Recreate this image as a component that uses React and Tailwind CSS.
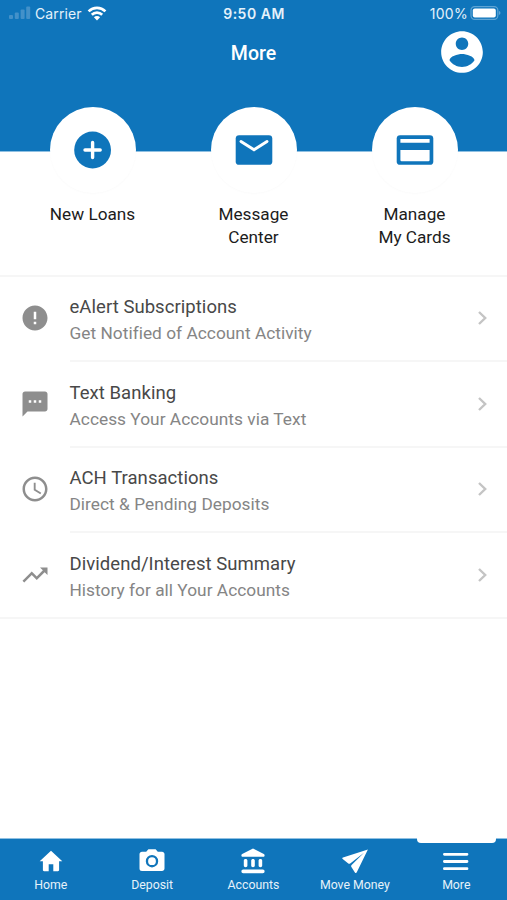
import React from "react";

const actions = [
  {
    label: ["New Loans"],
    icon: (
      <svg viewBox="0 0 44 44" className="h-11 w-11">
        <circle cx="21.6" cy="22" r="18.4" fill="#0f75bb" />
        <path d="M21.6 14.4v15.2M14 22h15.2" stroke="#fff" strokeWidth="3.4" strokeLinecap="round" />
      </svg>
    ),
  },
  {
    label: ["Message", "Center"],
    icon: (
      <svg viewBox="0 0 44 44" className="h-11 w-11">
        <rect x="3.7" y="7.2" width="36.6" height="29.6" rx="3.4" fill="#0f75bb" />
        <path d="M9 13.5 22 21.7 35 13.5" fill="none" stroke="#fff" strokeWidth="3" strokeLinecap="round" />
      </svg>
    ),
  },
  {
    label: ["Manage", "My Cards"],
    icon: (
      <svg viewBox="0 0 44 44" className="h-11 w-11">
        <rect x="3.7" y="7.2" width="36.6" height="29.6" rx="3.4" fill="#0f75bb" />
        <path d="M7.4 11h29.2v3.8H7.4zM7.4 22h29.2v10a1.2 1.2 0 0 1-1.2 1.2H8.6A1.2 1.2 0 0 1 7.4 32z" fill="#fff" />
      </svg>
    ),
  },
];

const rows = [
  {
    title: "eAlert Subscriptions",
    sub: "Get Notified of Account Activity",
    d: "M12 2C6.48 2 2 6.48 2 12s4.48 10 10 10 10-4.48 10-10S17.52 2 12 2zm1 15h-2v-2h2v2zm0-4h-2V7h2v6z",
  },
  {
    title: "Text Banking",
    sub: "Access Your Accounts via Text",
    d: "M20 2H4c-1.1 0-1.99.9-1.99 2L2 22l4-4h14c1.1 0 2-.9 2-2V4c0-1.1-.9-2-2-2zM9 11H7V9h2v2zm4 0h-2V9h2v2zm4 0h-2V9h2v2z",
  },
  {
    title: "ACH Transactions",
    sub: "Direct & Pending Deposits",
    d: "M11.99 2C6.47 2 2 6.48 2 12s4.47 10 9.99 10C17.52 22 22 17.52 22 12S17.52 2 11.99 2zM12 20c-4.42 0-8-3.58-8-8s3.58-8 8-8 8 3.58 8 8-3.58 8-8 8zm.5-13H11v6l5.25 3.15.75-1.23-4.5-2.67z",
  },
  {
    title: "Dividend/Interest Summary",
    sub: "History for all Your Accounts",
    d: "M16 6l2.29 2.29-4.88 4.88-4-4L2 16.59 3.41 18l6-6 4 4 6.3-6.29L22 12V6z",
  },
];

const tabs = [
  {
    label: "Home",
    icon: <path d="M14 2.8 2.7 13.2h3.2v8.9c0 .7.5 1.2 1.2 1.2h4.6v-7h4.6v7h4.6c.7 0 1.2-.5 1.2-1.2v-8.9h3.2z" />,
  },
  {
    label: "Deposit",
    icon: (
      <path
        fillRule="evenodd"
        d="M10.4 1.2h7.2l2.2 2.5h4.2c1.4 0 2.5 1.1 2.5 2.4v14.4c0 1.4-1.1 2.5-2.5 2.5H4a2.5 2.5 0 0 1-2.5-2.5V6.1c0-1.3 1.1-2.4 2.5-2.4h4.2zM14 7a6.2 6.2 0 1 0 0 12.4A6.2 6.2 0 0 0 14 7zm0 2.3a3.9 3.9 0 1 1 0 7.8 3.9 3.9 0 0 1 0-7.8z"
      />
    ),
  },
  {
    label: "Accounts",
    icon: (
      <path d="M14 0.4 3.2 5.9a1.5 1.5 0 0 0-.8 1.4v.2c0 .8.5 1.3 1.3 1.3h20.6c.8 0 1.3-.5 1.3-1.3v-.2c0-.6-.3-1.1-.8-1.4zM6.6 10.9c1.1 0 1.8.7 1.8 1.7v4.9c0 1-.7 1.7-1.8 1.7s-1.8-.7-1.8-1.7v-4.9c0-1 .7-1.7 1.8-1.7zM14 10.9c1.1 0 1.8.7 1.8 1.7v4.9c0 1-.7 1.7-1.8 1.7s-1.8-.7-1.8-1.7v-4.9c0-1 .7-1.7 1.8-1.7zM21.4 10.9c1.1 0 1.8.7 1.8 1.7v4.9c0 1-.7 1.7-1.8 1.7s-1.8-.7-1.8-1.7v-4.9c0-1 .7-1.7 1.8-1.7zM4.2 21.5h19.6a1.8 1.8 0 0 1 0 3.7H4.2a1.8 1.8 0 0 1 0-3.7z" />
    ),
  },
  {
    label: "Move Money",
    icon: (
      <path d="M26.9 1.4 2 9.4c-.8.3-.9 1-.3 1.6l5.6 4.4c.6.4 1.3.4 1.9 0L23 4.7 10.6 17c-.6.6-.6 1.2-.2 1.9l3.5 5.5c.6.7 1.4.7 1.9-.1z" />
    ),
  },
  {
    label: "More",
    icon: (
      <path
        d="M2.4 6.3h22.6M2.4 13.5h22.6M2.4 20.7h22.6"
        stroke="#fff"
        strokeWidth="2.8"
        strokeLinecap="round"
      />
    ),
  },
];

function StatusBar() {
  return (
    <div className="grid h-[26px] grid-cols-[1fr_auto_1fr] items-center pr-[6px] pl-[9px] font-['Inter'] text-[14px] text-[#e4f1fa]">
      <div className="flex items-center">
        <svg viewBox="0 0 22 14" className="h-[14px] w-[22px]" fill="#4391c9">
          <rect x="0" y="9" width="4" height="4" rx="1" />
          <rect x="5.8" y="6.5" width="4" height="6.5" rx="1" />
          <rect x="11.6" y="3.5" width="4" height="9.5" rx="1" />
          <rect x="17.2" y="0.5" width="4" height="12.5" rx="1" />
        </svg>
        <span className="ml-1 w-[47px] tracking-[0.1px] whitespace-nowrap">Carrier</span>
        <svg viewBox="0 0 20 15" className="ml-[5px] h-[15px] w-5" fill="none" stroke="#fff" strokeWidth="2.7">
          <path d="M1.6 5.4a12 12 0 0 1 16.8 0" />
          <path d="M4.8 8.8a7.4 7.4 0 0 1 10.4 0" />
          <path d="M10 14.4 6.9 11.2a4.4 4.4 0 0 1 6.2 0z" fill="#fff" stroke="none" />
        </svg>
      </div>
      <span className="pr-[2px] text-center font-semibold tracking-[0.5px] whitespace-nowrap">9:50 AM</span>
      <div className="flex items-center justify-end">
        <span className="tracking-[0.3px]">100%</span>
        <svg viewBox="0 0 31 14" className="ml-[2px] h-[14px] w-[31px]">
          <rect x="1" y="0.6" width="26.8" height="12.8" rx="3.6" fill="none" stroke="#5ea4d4" strokeWidth="1.2" />
          <rect x="2.8" y="2.4" width="23" height="9.2" rx="2" fill="#fff" />
          <path d="M28.9 4.8q3.2 2.2 0 4.4z" fill="#5ea4d4" />
        </svg>
      </div>
    </div>
  );
}

export default function App() {
  return (
    <div className="flex h-[900px] w-[507px] flex-col overflow-hidden bg-white font-['Roboto',sans-serif]">
      <header className="h-[152px] shrink-0 border-b border-[#8fc0e2] bg-[#0f75bb]">
        <StatusBar />
        <div className="grid h-[52px] grid-cols-[1fr_auto_1fr] items-center pr-5">
          <span className="w-5" />
          <h1 className="pt-1 pl-5 text-[19.5px] font-medium text-white">More</h1>
          <svg viewBox="0 0 24 24" className="h-[50px] w-[50px] justify-self-end" fill="#fff">
            <path d="M12 2C6.48 2 2 6.48 2 12s4.48 10 10 10 10-4.48 10-10S17.52 2 12 2zm0 3c1.66 0 3 1.34 3 3s-1.34 3-3 3-3-1.34-3-3 1.34-3 3-3zm0 14.2c-2.5 0-4.71-1.28-6-3.22.03-1.99 4-3.08 6-3.08 1.99 0 5.97 1.09 6 3.08-1.29 1.94-3.5 3.22-6 3.22z" />
          </svg>
        </div>
      </header>

      <section className="-mt-[45px] grid h-[169.5px] shrink-0 grid-cols-3 border-b-2 border-[#f6f6f6] px-[12px]">
        {actions.map((a) => (
          <div key={a.label[0]} className="flex flex-col items-center">
            <div className="flex h-[86px] w-[86px] items-center justify-center rounded-full bg-white shadow-[0_1px_2px_rgba(0,0,0,0.02)]">
              {a.icon}
            </div>
            <div className="mt-[10px] text-center text-[17.2px] leading-[22.5px] text-[#1c1c1c]">
              {a.label.map((l) => (
                <div key={l}>{l}</div>
              ))}
            </div>
          </div>
        ))}
      </section>

      <main className="flex-1">
        {rows.map((r, i) => (
          <div key={r.title} className="flex h-[85.5px]">
            <div className={`flex w-[69.5px] items-center pl-5 ${i === 3 ? "border-b-2 border-[#f6f6f6]" : "pb-[2px]"}`}>
              <svg viewBox="0 0 24 24" className="h-[30px] w-[30px]" fill="#8e8e8e">
                <path d={r.d} />
              </svg>
            </div>
            <div className="flex flex-1 items-center justify-between border-b-2 border-[#f6f6f6] pr-[18px]">
              <div className="pt-[4px] leading-[26px] whitespace-nowrap">
                <div className="text-[18.5px] tracking-[0.05px] text-[#484848]">{r.title}</div>
                <div className="text-[17.3px] tracking-[0.03px] text-[#858585]">{r.sub}</div>
              </div>
              <svg viewBox="0 0 12 16" className="h-4 w-3" fill="none" stroke="#c4c4c4" strokeWidth="2.4">
                <path d="m2 2 6.2 6L2 14" />
              </svg>
            </div>
          </div>
        ))}
      </main>

      <nav className="relative grid h-[62px] shrink-0 grid-cols-5 border-t border-[#8fc0e2] bg-[#0f75bb]">
        <span className="absolute -top-1 right-[11px] h-2 w-[79px] rounded-b-[4px] bg-white" />
        {tabs.map((t) => (
          <div key={t.label} className="flex flex-col items-center pt-[9px] text-white">
            <svg viewBox="0 0 28 28" className="h-7 w-7" fill="#fff">
              {t.icon}
            </svg>
            <span className="pt-px text-[12.3px] leading-4 whitespace-nowrap text-[#e6f2fa]">{t.label}</span>
          </div>
        ))}
      </nav>
    </div>
  );
}
